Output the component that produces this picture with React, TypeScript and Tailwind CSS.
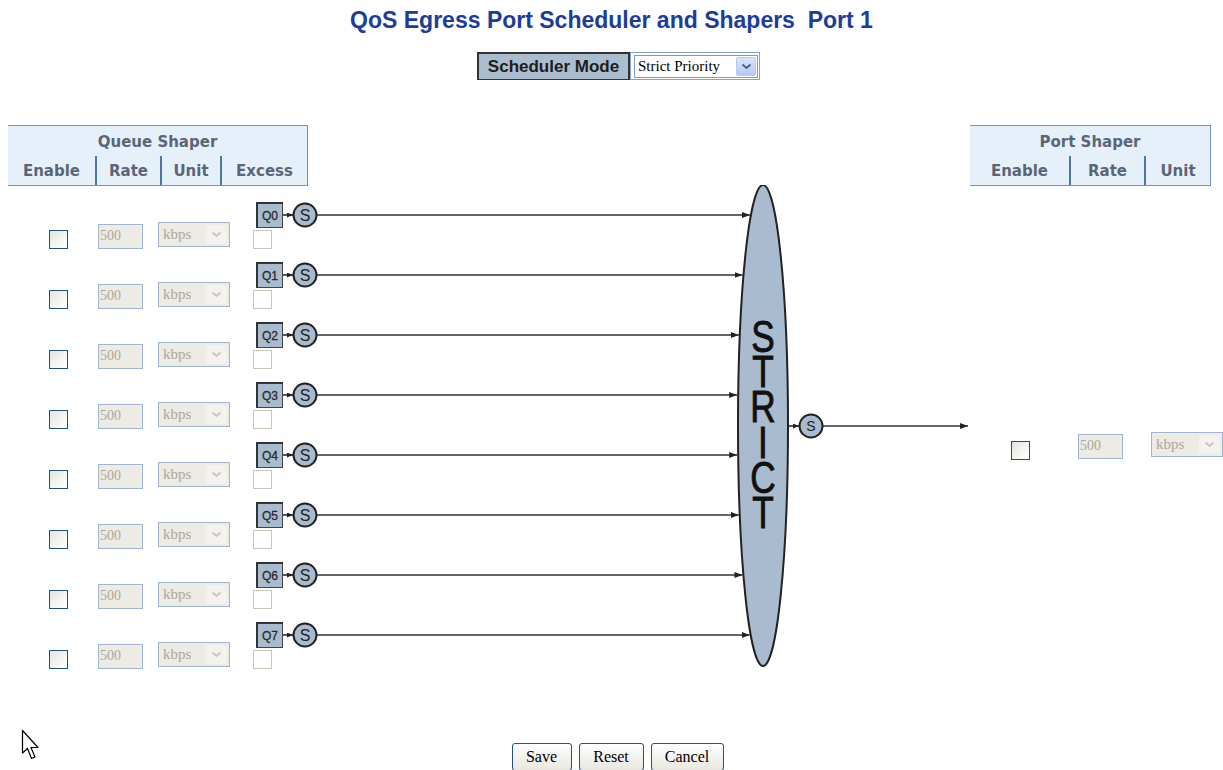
import React from 'react';

const queues = [0, 1, 2, 3, 4, 5, 6, 7];

const ELLIPSE = { cx: 763, cy: 425.5, rx: 25, ry: 240.5 };

function edgeX(y: number) {
  const t = (y - ELLIPSE.cy) / ELLIPSE.ry;
  return ELLIPSE.cx - ELLIPSE.rx * Math.sqrt(Math.max(0, 1 - t * t));
}

function Checkbox({ disabled }: { disabled?: boolean }) {
  return disabled ? (
    <span className="block h-[19px] w-[19px] border border-[#c9c7ba] bg-white" />
  ) : (
    <span className="block h-[19px] w-[19px] border border-[#1c5180] bg-gradient-to-br from-[#e3e3dd] via-[#f3f3ef] to-white" />
  );
}

function RateInput({ value }: { value: string }) {
  return (
    <input
      disabled
      value={value}
      readOnly
      className="h-[25px] w-[45px] border border-[#9fb5d2] bg-[#ecebe4] px-[1px] font-['Liberation_Serif',serif] text-[14px] text-[#aca899] outline-none"
    />
  );
}

function UnitSelect() {
  return (
    <div className="flex h-[25px] w-[72px] items-center border border-[#9fb5d2] bg-[#ecebe4]">
      <span className="flex-1 pl-[4px] font-['Liberation_Serif',serif] text-[15px] leading-none text-[#aca899]">kbps</span>
      <span className="mr-[2px] flex h-[19px] w-[21px] items-center justify-center rounded-[2px] bg-[#f3f2ee]">
        <svg width="11" height="7" viewBox="0 0 11 7">
          <path d="M1.5 1.5 L5.5 5 L9.5 1.5" fill="none" stroke="#c9c7ba" strokeWidth="2" />
        </svg>
      </span>
    </div>
  );
}

function ShaperHeader({ title, cols }: { title: string; cols: { label: string; w: number }[] }) {
  return (
    <div className="border-t border-b border-r border-[#7193c4] bg-[#e6f0fb] font-['DejaVu_Sans',sans-serif] text-[15px] font-bold text-[#5a6576]">
      <div className="flex h-[30px] items-center justify-center pt-[2px]">{title}</div>
      <div className="flex h-[29px]">
        {cols.map((c, i) => (
          <div
            key={c.label}
            style={{ width: c.w }}
            className={`flex items-center justify-center pt-[1px] ${i > 0 ? 'border-l-2 border-[#4e74a8]' : ''}`}
          >
            {c.label}
          </div>
        ))}
      </div>
    </div>
  );
}

function Diagram() {
  return (
    <svg
      className="pointer-events-none absolute left-[250px] top-[60px]"
      width="730"
      height="490"
      viewBox="250 185 730 490"
    >
      <defs>
        <marker id="arr" markerWidth="8" markerHeight="6" refX="8" refY="3" orient="auto" markerUnits="userSpaceOnUse">
          <path d="M0 0 L8 3 L0 6 Z" fill="#222" />
        </marker>
        <marker id="arrs" markerWidth="6" markerHeight="5" refX="6" refY="2.5" orient="auto" markerUnits="userSpaceOnUse">
          <path d="M0 0 L6 2.5 L0 5 Z" fill="#222" />
        </marker>
      </defs>
      {queues.map(i => {
        const y = 215 + i * 60;
        return (
          <g key={i}>
            <rect x="257.5" y={y - 12.5} width="25" height="25" fill="#a9bccf" stroke="#444" strokeWidth="1" />
            <path d={`M257 ${y + 13} V${y - 12} H283`} fill="none" stroke="#333" strokeWidth="2" />
            <text x="270" y={y + 4.5} textAnchor="middle" fontFamily="Liberation Sans, sans-serif" fontSize="12" fill="#2a2a2a" stroke="#2a2a2a" strokeWidth="0.3">
              Q{i}
            </text>
            <line x1="283" y1={y} x2="293" y2={y} stroke="#222" strokeWidth="1.5" markerEnd="url(#arrs)" />
            <circle cx="305" cy={y} r="11.5" fill="#a9bccf" stroke="#222" strokeWidth="2" />
            <text x="305" y={y + 6} textAnchor="middle" fontFamily="Liberation Sans, sans-serif" fontSize="16" fill="#222">
              S
            </text>
            <line x1="317" y1={y} x2={edgeX(y) - 1} y2={y} stroke="#333" strokeWidth="1.5" markerEnd="url(#arr)" />
          </g>
        );
      })}
      <ellipse cx={ELLIPSE.cx} cy={ELLIPSE.cy} rx={ELLIPSE.rx} ry={ELLIPSE.ry} fill="#a9bccf" stroke="#222" strokeWidth="2" />
      <text
        transform="translate(763 0) scale(0.8 1)"
        textAnchor="middle"
        fontFamily="Liberation Sans, sans-serif"
        fontSize="44"
        fill="#111"
        stroke="#111"
        strokeWidth="0.9"
      >
        {['S', 'T', 'R', 'I', 'C', 'T'].map((ch, k) => (
          <tspan key={k} x="0" y={352 + k * 35.2}>
            {ch}
          </tspan>
        ))}
      </text>
      <line x1="788" y1="426" x2="799" y2="426" stroke="#222" strokeWidth="1.5" markerEnd="url(#arrs)" />
      <circle cx="811" cy="426" r="11.5" fill="#a9bccf" stroke="#222" strokeWidth="2" />
      <text x="811" y="431" textAnchor="middle" fontFamily="Liberation Sans, sans-serif" fontSize="14" fill="#222">
        S
      </text>
      <line x1="823" y1="426" x2="968" y2="426" stroke="#333" strokeWidth="1.5" markerEnd="url(#arr)" />
    </svg>
  );
}

function XpButton({ label, w }: { label: string; w: number }) {
  return (
    <button
      type="button"
      style={{ width: w }}
      className="h-[28px] rounded-[3px] border border-[#2b4f80] bg-gradient-to-b from-white to-[#e8e7df] font-['Liberation_Serif',serif] text-[16px] text-black"
    >
      {label}
    </button>
  );
}

export default function App() {
  return (
    <div className="relative h-[770px] w-[1223px] overflow-hidden bg-white">
      <h1 className="pt-[7px] text-center font-['Liberation_Sans',sans-serif] text-[23px] font-bold leading-[27px] text-[#1c3d9a]">
        QoS Egress Port Scheduler and Shapers&nbsp; Port 1
      </h1>

      <div className="mt-[18px] flex justify-center pl-[14px]">
        <div className="flex h-[28px] w-[153px] items-center justify-center border-x-2 border-t-2 border-b border-[#333] bg-[#aabdcf] font-['Liberation_Sans',sans-serif] text-[17px] font-bold text-[#1d1d1d]">
          Scheduler Mode
        </div>
        <div className="flex h-[28px] w-[130px] items-center border border-[#86a3c8] pl-[3px]">
          <div className="flex h-[23px] w-[124px] items-center border border-[#7f9db9] bg-white">
            <span className="flex-1 pl-[3px] font-['Liberation_Serif',serif] text-[15px] leading-none text-black">Strict Priority</span>
            <span className="mr-[1px] flex h-[19px] w-[20px] items-center justify-center rounded-[2px] border border-[#b6c9f0] bg-gradient-to-b from-[#dbe6fd] to-[#b3c8f5]">
              <svg width="11" height="7" viewBox="0 0 11 7">
                <path d="M1.5 1.5 L5.5 5 L9.5 1.5" fill="none" stroke="#4d6185" strokeWidth="2" />
              </svg>
            </span>
          </div>
        </div>
      </div>

      <div className="relative mt-[45px] flex justify-between">
        <div className="ml-[8px] w-[300px]">
          <ShaperHeader
            title="Queue Shaper"
            cols={[
              { label: 'Enable', w: 87 },
              { label: 'Rate', w: 65 },
              { label: 'Unit', w: 60 },
              { label: 'Excess', w: 87 },
            ]}
          />
          <div className="mt-[20px]">
            {queues.map(i => (
              <div key={i} className="flex h-[60px] items-start">
                <div className="ml-[41px] mt-[24px]">
                  <Checkbox />
                </div>
                <div className="ml-[30px] mt-[16px]">
                  <RateInput value="500" />
                </div>
                <div className="ml-[15px] mt-[16px]">
                  <UnitSelect />
                </div>
                <div className="ml-[23px] mt-[24px]">
                  <Checkbox disabled />
                </div>
              </div>
            ))}
          </div>
        </div>

        <div className="mr-[12px] w-[241px]">
          <ShaperHeader
            title="Port Shaper"
            cols={[
              { label: 'Enable', w: 99 },
              { label: 'Rate', w: 75 },
              { label: 'Unit', w: 66 },
            ]}
          />
          <div className="mt-[246px] flex items-start">
            <div className="ml-[41px] mt-[9px]">
              <Checkbox />
            </div>
            <div className="ml-[48px]">
              <RateInput value="500" />
            </div>
            <div className="ml-[28px] -mr-[11px]">
              <UnitSelect />
            </div>
          </div>
        </div>

        <Diagram />
      </div>

      <div className="mt-[57px] flex justify-center gap-[7px] pl-[12px]">
        <XpButton label="Save" w={60} />
        <XpButton label="Reset" w={65} />
        <XpButton label="Cancel" w={73} />
      </div>

      <svg className="pointer-events-none absolute left-[21px] top-[729px]" width="20" height="34" viewBox="0 0 20 34">
        <path
          d="M1.5 1.5 L1.5 24 L6.5 19.5 L10.5 29.5 L14 28 L10 18.5 L17 18.5 Z"
          fill="white"
          stroke="black"
          strokeWidth="1.2"
          strokeLinejoin="round"
        />
      </svg>
    </div>
  );
}
